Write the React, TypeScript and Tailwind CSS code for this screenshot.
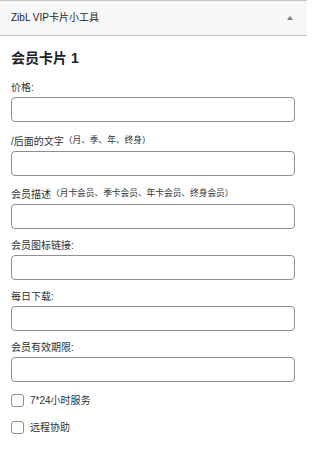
const FONT = "font-['Liberation_Sans','Noto_Sans_CJK_SC',sans-serif]";

type Field = { label: string; note?: string; extra?: string };

const FIELDS: Field[] = [
  { label: "价格:" },
  { label: "/后面的文字", note: "（月、季、年、终身）", extra: "mt-[3px]" },
  { label: "会员描述", note: "（月卡会员、季卡会员、年卡会员、终身会员）", extra: "mt-[2px]" },
  { label: "会员图标链接:" },
  { label: "每日下载:" },
  { label: "会员有效期限:" },
];

const CHECKS = ["7*24小时服务", "远程协助"];

export default function App() {
  return (
    <div className={`${FONT} w-[307px] min-h-[449px] bg-white text-[#1d2327]`}>
      {/* Header */}
      <div className="flex h-[36px] items-center justify-between border-t border-b border-[#c3c4c7] bg-[#f6f7f7] pl-[11px] pr-[14px]">
        <span className="text-[10px] leading-none">ZibL VIP卡片小工具</span>
        <span className="h-0 w-0 border-x-[3px] border-b-[4px] border-x-transparent border-b-[#787c82]" />
      </div>

      {/* Body */}
      <div className="pl-[11px] pr-[12px] pt-[12px]">
        <h3 className="text-[14px] font-bold leading-[20px]">会员卡片 1</h3>

        <div className="mt-[13px] flex flex-col gap-[10px]">
          {FIELDS.map((f) => (
            <div key={f.label} className={f.extra}>
              <label className="mb-[2px] block text-[10px] leading-[14px] text-[#2c3338]">
                {f.label}
                {f.note && (
                  <span className="relative top-[-2px] text-[8.7px]">{f.note}</span>
                )}
              </label>
              <input
                type="text"
                className="block h-[25px] w-full rounded-[4px] border border-[#8c8f94] bg-white px-2 text-[12px] outline-none"
              />
            </div>
          ))}
        </div>

        <div className="mt-[12px] flex flex-col gap-[14px]">
          {CHECKS.map((c) => (
            <label key={c} className="flex items-center gap-[6px] text-[10px] leading-[13px] text-[#2c3338]">
              <span className="inline-block h-[13px] w-[13px] rounded-[3px] border border-[#8c8f94] bg-white" />
              {c}
            </label>
          ))}
        </div>
      </div>
    </div>
  );
}
